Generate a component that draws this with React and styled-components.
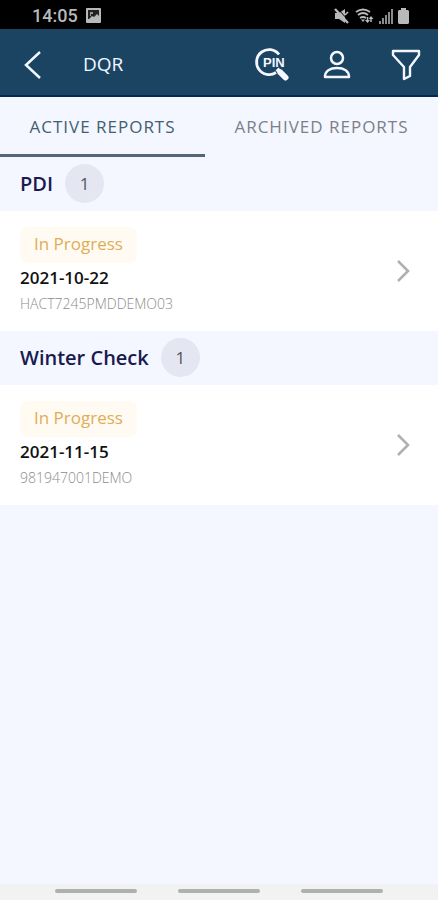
import React, { useState } from "react";
import styled, { createGlobalStyle } from "styled-components";

const GlobalStyle = createGlobalStyle`
    * {
        box-sizing: border-box;
    }

    body {
        background-color: #f4f7ff;
        font-family: "Open Sans", "Noto Sans", sans-serif;
        margin: 0;
    }

    h1, h2, p, ul {
        margin: 0;
        padding: 0;
    }
`;

const Screen = styled.div`
    display: flex;
    flex-direction: column;
    min-height: 100vh;
`;

const StatusBar = styled.div`
    align-items: center;
    background-color: #000000;
    color: #b9b9b9;
    display: flex;
    height: 29px;
    justify-content: space-between;
    padding: 2px 29px 0 32px;
`;

const Clock = styled.span`
    font-family: Roboto, sans-serif;
    font-size: 18px;
    font-weight: 500;
    line-height: 20px;
`;

const StatusGroup = styled.div`
    align-items: center;
    display: flex;
    gap: ${({gap}) => gap}px;
`;

const Icon = styled.svg`
    display: block;
    flex: none;
    fill: none;
    stroke: currentColor;
`;

const Header = styled.header`
    align-items: center;
    background-color: #1a4462;
    border-bottom: 2px solid #062656;
    color: #f4f7ff;
    display: flex;
    height: 68px;
    padding: 6px 16px 0 20px;
`;

const VanillaButton = styled.button`
    background: none;
    border: 0;
    color: inherit;
    cursor: pointer;
    font-family: inherit;
    padding: 0;
`;

const Title = styled.h1`
    flex: 1;
    font-size: 19px;
    font-weight: 400;
    line-height: 24px;
    padding: 0 0 2px 38px;
`;

const Actions = styled.div`
    align-items: center;
    display: flex;
    gap: 33px;
`;

const Tabs = styled.div`
    display: flex;
    height: 60px;
`;

const Tab = styled(VanillaButton)`
    border-bottom: 3px solid ${({chosen}) => chosen ? '#536678' : 'transparent'};
    color: ${({chosen}) => chosen ? '#426070' : '#7c8087'};
    flex: auto;
    font-size: 17px;
    letter-spacing: 1px;
    line-height: 24px;
    padding-top: 2px;
    white-space: nowrap;
`;

const Content = styled.main`
    flex: 1;
`;

const SectionHeader = styled.div`
    align-items: center;
    display: flex;
    gap: 12px;
    height: 54px;
    padding: 0 20px 1px;
`;

const SectionTitle = styled.h2`
    color: #1a1a50;
    font-size: 20px;
    font-weight: 600;
    line-height: 28px;
`;

const Count = styled.span`
    background-color: #e4e7f1;
    border-radius: 50%;
    color: #55565e;
    font-size: 17px;
    height: 39px;
    line-height: 39px;
    text-align: center;
    width: 39px;
`;

const ReportList = styled.ul`
    list-style: none;
`;

const Report = styled(VanillaButton)`
    align-items: center;
    background-color: #ffffff;
    color: #b0b0b0;
    display: flex;
    height: 120px;
    justify-content: space-between;
    padding: 0 28px 0 20px;
    text-align: left;
    width: 100%;
`;

const Details = styled.div`
    align-items: flex-start;
    display: flex;
    flex-direction: column;
`;

const Status = styled.span`
    background-color: #fffbf2;
    border-radius: 8px;
    color: #e0ad58;
    font-size: 17px;
    line-height: 34px;
    padding: 0 14px 2px;
`;

const ReportDate = styled.p`
    color: #111111;
    font-size: 17px;
    font-weight: 600;
    line-height: 30px;
`;

const Pin = styled.p`
    color: #8c8c8c;
    font-size: 14px;
    font-weight: 300;
    line-height: 22px;
`;

const SystemNav = styled.div`
    align-items: center;
    background-color: #f2f2f2;
    display: flex;
    gap: 41px;
    height: 16px;
    justify-content: center;
    padding-bottom: 2px;
`;

const NavHandle = styled.span`
    background-color: #adb1af;
    border-radius: 2px;
    height: 4px;
    width: 82px;
`;

const sections = {
    active: [
        { title: "PDI", reports: [{ date: "2021-10-22", pin: "HACT7245PMDDEMO03", status: "In Progress" }] },
        { title: "Winter Check", reports: [{ date: "2021-11-15", pin: "981947001DEMO", status: "In Progress" }] },
    ],
    archived: [],
};

function PhoneStatus (){
    return (
        <StatusBar>
            <StatusGroup gap={8}>
                <Clock>14:05</Clock>
                <Icon width="15" height="15" viewBox="0 0 15 15">
                    <rect width="15" height="15" rx="1" fill="currentColor" stroke="none"/>
                    <path d="M2 11V2h11v6l-2-2-3 3-2-1-3 3z" fill="#222222" stroke="none"/>
                    <path d="M4 5h3M4 7h1" strokeWidth="1.500"/>
                </Icon>
            </StatusGroup>
            <StatusGroup gap={5}>
                <Icon width="16" height="16" viewBox="0 0 16 16">
                    <path d="M1 5h4l6-4v14l-6-4H1z" fill="currentColor" stroke="none"/>
                    <path d="M3 0l13 14" stroke="#000000" strokeWidth="1"/>
                    <path d="M1 1l13 14" strokeWidth="2.400"/>
                    <path d="M11 7l3-3" strokeWidth="1.600"/>
                </Icon>
                <Icon width="19" height="16" viewBox="0 0 19 16">
                    <path d="M1 4q7-5 14 0M3 7q5-4 10 0M5 10q3-2 6 0" strokeWidth="1.800"/>
                    <path d="M6 11.500h4l-2 2.500z" fill="currentColor" stroke="none"/>
                    <path d="M12.500 9v5M16 14V9" strokeWidth="1.500"/>
                    <path d="M10 12h5l-2.500 3zM13.500 11h5L16 8z" fill="currentColor" stroke="none"/>
                </Icon>
                <Icon width="14" height="16" viewBox="0 0 14 16">
                    <path d="M1 16v-3M4 16v-6M7 16V7M10 16V4M13 16V1" strokeWidth="1.500"/>
                </Icon>
                <Icon width="11" height="16" viewBox="0 0 11 16">
                    <path d="M3 0h5v2h2l1 1v12l-1 1H1l-1-1V3l1-1h2z" fill="currentColor" stroke="none"/>
                </Icon>
            </StatusGroup>
        </StatusBar>
    )
}

function Toolbar (){
    return (
        <Header>
            <VanillaButton aria-label="Back">
                <Icon width="25" height="32" viewBox="0 0 25 32">
                    <path d="M20 3L6 16l14 13" strokeWidth="2.500"/>
                </Icon>
            </VanillaButton>
            <Title>DQR</Title>
            <Actions>
                <VanillaButton aria-label="Search by PIN">
                    <Icon width="36" height="36" viewBox="0 0 36 36">
                        <path d="M25 7.500A12.500 12.500 0 1 0 22 25.500" strokeWidth="2.800"/>
                        <path d="M23 22l3 3" strokeWidth="4"/>
                        <path d="M26.500 25.500l5 5" strokeWidth="6" strokeLinecap="round"/>
                        <text x="9" y="20" fill="currentColor" stroke="none" fontFamily="Liberation Sans" fontSize="13" fontWeight="700">PIN</text>
                    </Icon>
                </VanillaButton>
                <VanillaButton aria-label="Profile">
                    <Icon width="28" height="32" viewBox="0 0 28 32">
                        <circle cx="14" cy="9" r="6" strokeWidth="2.500"/>
                        <path d="M2 28C2 22 7 19 14 19s12 3 12 9z" strokeWidth="2.500" strokeLinejoin="round"/>
                    </Icon>
                </VanillaButton>
                <VanillaButton aria-label="Filter">
                    <Icon width="38" height="32" viewBox="-6 0 38 32">
                        <path d="M3 2h26v4l-9 12v9l-6 3V18L3 6z" strokeWidth="2.400" strokeLinejoin="round"/>
                    </Icon>
                </VanillaButton>
            </Actions>
        </Header>
    )
}

export default function App (){
    const [tab, setTab] = useState("active")

    return (
        <Screen>
            <GlobalStyle/>
            <PhoneStatus/>
            <Toolbar/>
            <Tabs role="tablist">
                <Tab role="tab" aria-selected={tab === "active"} chosen={tab === "active"} onClick={() => setTab("active")}>ACTIVE REPORTS</Tab>
                <Tab role="tab" aria-selected={tab === "archived"} chosen={tab === "archived"} onClick={() => setTab("archived")}>ARCHIVED REPORTS</Tab>
            </Tabs>
            <Content>
                {sections[tab].map(({title, reports}) => (
                    <section key={title}>
                        <SectionHeader>
                            <SectionTitle>{title}</SectionTitle>
                            <Count>{reports.length}</Count>
                        </SectionHeader>
                        <ReportList>
                            {reports.map(({date, pin, status}) => (
                                <li key={pin}>
                                    <Report>
                                        <Details>
                                            <Status>{status}</Status>
                                            <ReportDate>{date}</ReportDate>
                                            <Pin>{pin}</Pin>
                                        </Details>
                                        <Icon width="14" height="22" viewBox="0 0 14 22">
                                            <path d="M2 1l10 10L2 21" strokeWidth="2.600"/>
                                        </Icon>
                                    </Report>
                                </li>
                            ))}
                        </ReportList>
                    </section>
                ))}
            </Content>
            <SystemNav>
                <NavHandle/>
                <NavHandle/>
                <NavHandle/>
            </SystemNav>
        </Screen>
    )
}
